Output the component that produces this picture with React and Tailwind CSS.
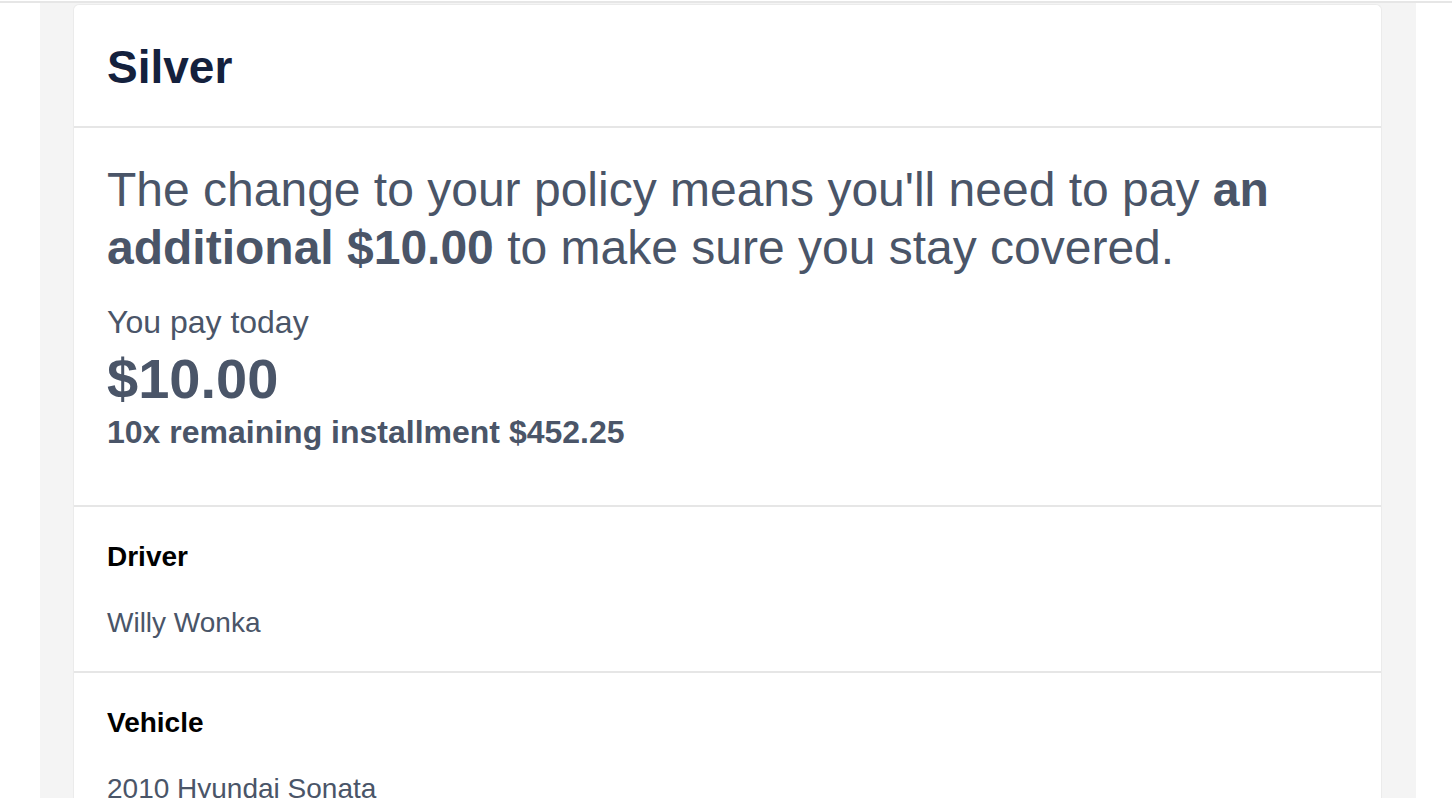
import React from "react";

const Row = ({ label, value }) => (
  <div className="border-t-2 border-[#e6e6e6] px-[33px] pt-[33px] pb-[31px]">
    <div className="text-[28px] leading-[34px] font-bold text-black">{label}</div>
    <div className="mt-[32px] text-[28px] leading-[34px] text-[#4a5568]">{value}</div>
  </div>
);

const App = () => {
  return (
    <div
      className="h-[798px] w-full overflow-hidden bg-white pt-px"
      style={{ fontFamily: '"Liberation Sans", Arial, sans-serif' }}
    >
      <div className="h-[2px] w-full bg-[#e6e6e6]" />
      <div className="ml-[40px] h-[795px] w-[1376px] bg-[#f4f4f4] pl-[33px] pr-[34px] pt-px">
        <div className="h-full rounded-t-[6px] border border-b-0 border-[#ebebeb] bg-white">
          {/* Plan name */}
          <div className="px-[33px] pt-[35px] pb-[31px]">
            <h1 className="text-[46px] leading-[55px] font-bold text-[#14213d]">Silver</h1>
          </div>

          {/* Price change */}
          <div className="border-t-2 border-[#e6e6e6] px-[33px] pt-[33px] pb-[54px] text-[#4a5568]">
            <p className="text-[48px] leading-[58px]">
              The change to your policy means you'll need to pay{" "}
              <strong className="font-bold">an additional $10.00</strong> to make sure you stay covered.
            </p>
            <div className="mt-[26px] text-[32px] leading-[38px]">You pay today</div>
            <div className="mt-[6px] text-[56px] leading-[64px] font-bold">$10.00</div>
            <div className="mt-[2px] text-[32px] leading-[38px] font-bold">10x remaining installment $452.25</div>
          </div>

          <Row label="Driver" value="Willy Wonka" />
          <Row label="Vehicle" value="2010 Hyundai Sonata" />
        </div>
      </div>
    </div>
  );
};

export default App;
